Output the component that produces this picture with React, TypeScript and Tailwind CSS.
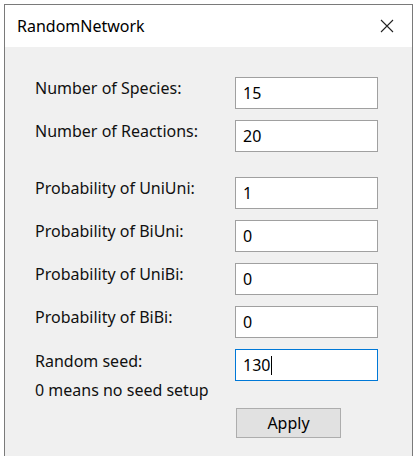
import React from "react";

const font = { fontFamily: '"Noto Sans", "Open Sans", sans-serif' };

function Field({ value, active }: { value: string; active?: boolean }) {
  return (
    <div
      className={
        "w-[143px] h-[32px] bg-white flex items-center pl-[7px] text-[16px] text-black shrink-0 " +
        (active ? "border border-[#0078d7]" : "border border-[#a0a0a0]")
      }
    >
      <span>{value}</span>
      {active && <span className="w-px h-[19px] bg-black ml-[1px]" />}
    </div>
  );
}

function Row({ label, value, className }: { label: string; value: string; className?: string }) {
  return (
    <div className={"flex items-start " + (className ?? "")}>
      <div className="w-[200px] pt-[1px] leading-[20px] text-[16px] text-[#111]">{label}</div>
      <Field value={value} />
    </div>
  );
}

export default function App() {
  return (
    <div className="w-[420px] h-[456px] bg-white overflow-hidden pt-[4px] pl-[4px]" style={font}>
      <div className="w-[409px] h-[452px] border-x border-t border-[#7a7a7a] flex flex-col">
        <div className="h-[42px] bg-white flex items-center justify-between pl-[12px] pr-[16px] shrink-0">
          <span className="text-[16px] text-black leading-none">RandomNetwork</span>
          <svg width="14" height="14" viewBox="0 0 14 14" className="mr-[2px]">
            <path d="M1 1 L13 13 M13 1 L1 13" stroke="#222" strokeWidth="1.1" fill="none" />
          </svg>
        </div>
        <div className="flex-1 bg-[#f0f0f0] pl-[30px] pt-[30px] flex flex-col">
          <Row label="Number of Species:" value="15" />
          <Row label="Number of Reactions:" value="20" className="mt-[11px]" />
          <Row label="Probability of UniUni:" value="1" className="mt-[25px]" />
          <Row label="Probability of BiUni:" value="0" className="mt-[11px]" />
          <Row label="Probability of UniBi:" value="0" className="mt-[11px]" />
          <Row label="Probability of BiBi:" value="0" className="mt-[11px]" />
          <div className="flex items-start h-[32px] mt-[11px]">
            <div className="w-[200px] pt-[2px] leading-[20px] text-[16px] text-[#111]">
              <div>Random seed:</div>
              <div className="mt-[9px]">0 means no seed setup</div>
            </div>
            <Field value="130" active />
          </div>
          <div className="flex mt-[27px] pl-[201px]">
            <button className="w-[105px] h-[30px] bg-[#e1e1e1] border border-[#adadad] text-[16px] text-black leading-none flex items-center justify-center">
              Apply
            </button>
          </div>
        </div>
      </div>
    </div>
  );
}
